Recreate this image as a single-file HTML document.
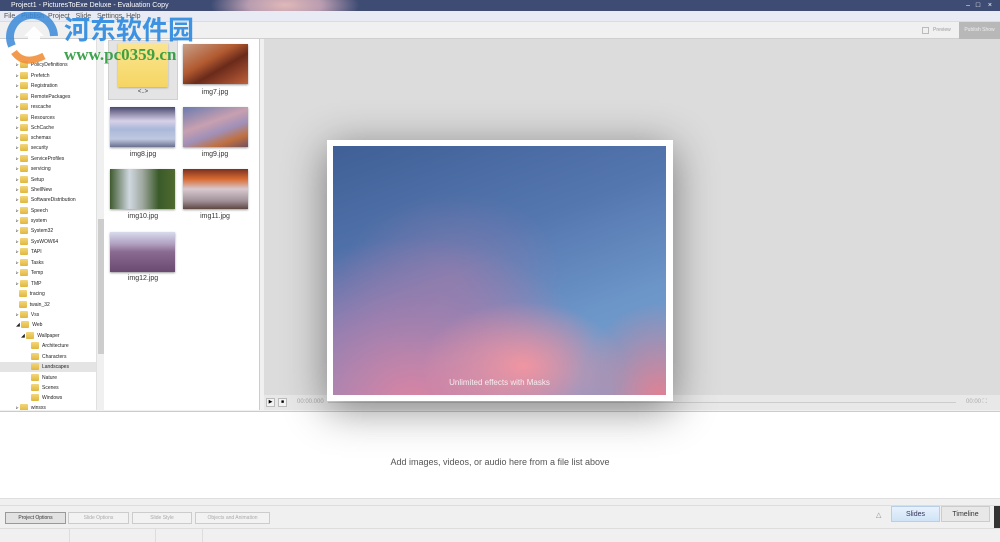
<!DOCTYPE html>
<html><head><meta charset="utf-8">
<style>
*{margin:0;padding:0;box-sizing:border-box}
body{width:1000px;height:541px;overflow:hidden;background:#f0f0f0;font-family:"Liberation Sans",sans-serif;position:relative}
.abs{position:absolute}
.title{left:0;top:0;width:1000px;height:11px;background:#3e4c74;color:#fff;font-size:7px;line-height:11px;padding-left:11px;overflow:hidden}
.menu{left:0;top:11px;width:1000px;height:11px;background:#e8ebf4;font-size:7px;line-height:11px;color:#555;padding-left:4px;border-bottom:1px solid #d8dce8}
.tool{left:0;top:22px;width:1000px;height:17px;background:#f0f0f0;border-bottom:1px solid #cfcfcf}
.tree{left:0;top:39px;width:104px;height:371px;background:#fff;border-right:1px solid #ccc;overflow:hidden}
.ti{position:absolute;height:10px;font-size:5px;line-height:10px;color:#222;white-space:nowrap}
.ti i{display:inline-block;width:8px;height:7px;background:linear-gradient(#f3d77a,#e0b640);vertical-align:middle;margin-right:3px;border-radius:1px}
.sb{left:96px;top:39px;width:8px;height:371px;background:#f0f0f0;border-left:1px solid #e0e0e0}
.thumbs{left:104px;top:39px;width:156px;height:371px;background:#fff;border-right:1px solid #ccc}
.th{position:absolute;width:65px;height:40px;box-shadow:0 1px 2px #999}
.lb{position:absolute;width:72px;text-align:center;font-size:7px;color:#333}
.prev{left:264px;top:39px;width:736px;height:356px;background:#dcdcdc}
.ctrl{left:264px;top:395px;width:736px;height:15px;background:#e8e8e8}
.frame{left:327px;top:140px;width:346px;height:261px;background:#fff;box-shadow:0 8px 40px rgba(0,0,0,.45)}
.img{left:333px;top:146px;width:333px;height:249px;overflow:hidden;background:linear-gradient(160deg,#3f5f96 0%,#5577b0 40%,#6c95c8 70%,#7aa4d2 100%)}
.bot{left:0;top:411px;width:1000px;height:87px;background:#fff;border-top:1px solid #ccc;text-align:center;font-size:9px;color:#555;line-height:100px}
.hs{left:0;top:498px;width:1000px;height:8px;background:#f0f0f0;border-top:1px solid #ddd;border-bottom:1px solid #ddd}
.btn{position:absolute;top:512px;height:12px;border:1px solid #ccc;font-size:5px;line-height:10px;text-align:center;color:#aaa;background:#f2f2f2}
.stat{left:0;top:528px;width:1000px;height:13px;background:#f0f0f0;border-top:1px solid #ddd}
</style></head><body>
<div class="abs title"><div class="abs" style="left:210px;top:-20px;width:150px;height:50px;background:radial-gradient(ellipse,#e0b8b8 0%,#b89cb0 35%,rgba(62,76,116,0) 70%)"></div><span style="position:relative">Project1 - PicturesToExe Deluxe - Evaluation Copy</span><span style="position:absolute;right:8px;top:0">&#8211;&nbsp;&nbsp;&nbsp;&#9633;&nbsp;&nbsp;&nbsp;&nbsp;&#215;</span></div>
<div class="abs menu">File&nbsp;&nbsp;&nbsp;Publish&nbsp;&nbsp;Project&nbsp;&nbsp;&nbsp;Slide&nbsp;&nbsp;&nbsp;Settings&nbsp;&nbsp;Help</div>
<div class="abs tool">
 <div class="abs" style="left:922px;top:5px;width:7px;height:7px;border:1px solid #bbb"></div>
 <div class="abs" style="left:933px;top:5px;font-size:5px;color:#999">Preview</div>
 <div class="abs" style="left:959px;top:0;width:41px;height:17px;background:#b8b8b8;color:#eee;font-size:5px;line-height:17px;text-align:center">Publish Show</div>
</div>
<div class="abs tree">
<div class="ti" style="left:16px;top:21px">▹ <i></i>PolicyDefinitions</div>
<div class="ti" style="left:16px;top:32px">▹ <i></i>Prefetch</div>
<div class="ti" style="left:16px;top:42px">▹ <i></i>Registration</div>
<div class="ti" style="left:16px;top:53px">▹ <i></i>RemotePackages</div>
<div class="ti" style="left:16px;top:63px">▹ <i></i>rescache</div>
<div class="ti" style="left:16px;top:74px">▹ <i></i>Resources</div>
<div class="ti" style="left:16px;top:84px">▹ <i></i>SchCache</div>
<div class="ti" style="left:16px;top:94px">▹ <i></i>schemas</div>
<div class="ti" style="left:16px;top:104px">▹ <i></i>security</div>
<div class="ti" style="left:16px;top:115px">▹ <i></i>ServiceProfiles</div>
<div class="ti" style="left:16px;top:125px">▹ <i></i>servicing</div>
<div class="ti" style="left:16px;top:136px">▹ <i></i>Setup</div>
<div class="ti" style="left:16px;top:146px">▹ <i></i>ShellNew</div>
<div class="ti" style="left:16px;top:156px">▹ <i></i>SoftwareDistribution</div>
<div class="ti" style="left:16px;top:167px">▹ <i></i>Speech</div>
<div class="ti" style="left:16px;top:177px">▹ <i></i>system</div>
<div class="ti" style="left:16px;top:187px">▹ <i></i>System32</div>
<div class="ti" style="left:16px;top:198px">▹ <i></i>SysWOW64</div>
<div class="ti" style="left:16px;top:208px">▹ <i></i>TAPI</div>
<div class="ti" style="left:16px;top:219px">▹ <i></i>Tasks</div>
<div class="ti" style="left:16px;top:229px">▹ <i></i>Temp</div>
<div class="ti" style="left:16px;top:240px">▹ <i></i>TMP</div>
<div class="ti" style="left:16px;top:250px">&nbsp;&nbsp;<i></i>tracing</div>
<div class="ti" style="left:16px;top:261px">&nbsp;&nbsp;<i></i>twain_32</div>
<div class="ti" style="left:16px;top:271px">▹ <i></i>Vss</div>
<div class="ti" style="left:16px;top:281px">◢ <i></i>Web</div>
<div class="ti" style="left:21px;top:292px">◢ <i></i>Wallpaper</div>
<div class="ti" style="left:31px;top:302px"><i></i>Architecture</div>
<div class="ti" style="left:31px;top:313px"><i></i>Characters</div>
<div class="ti" style="left:0;top:323px;width:96px;background:#e4e4e4;padding-left:31px"><i></i>Landscapes</div>
<div class="ti" style="left:31px;top:334px"><i></i>Nature</div>
<div class="ti" style="left:31px;top:344px"><i></i>Scenes</div>
<div class="ti" style="left:31px;top:354px"><i></i>Windows</div>
<div class="ti" style="left:16px;top:364px">▹ <i></i>winsxs</div>
</div>
<div class="abs sb"><div class="abs" style="left:1px;top:180px;width:6px;height:135px;background:#cdcdcd"></div></div>
<div class="abs thumbs">
 <div class="abs" style="left:4px;top:1px;width:70px;height:60px;background:#e4e4e4;border:1px solid #d0d0d0"></div>
 <div class="th" style="left:14px;top:4px;width:50px;height:44px;background:linear-gradient(#fbe591,#f5d563);box-shadow:0 1px 2px #aaa"></div>
 <div class="lb" style="left:3px;top:50px;font-size:6px">&lt;..&gt;</div>
 <div class="th" style="left:79px;top:5px;background:linear-gradient(150deg,#c7a08a,#b25a30 40%,#6a2a1a 60%,#c0603a)"></div>
 <div class="lb" style="left:75px;top:50px">img7.jpg</div>
 <div class="th" style="left:6px;top:68px;background:linear-gradient(#4a4a70,#d8d0e8 35%,#aab8d8 55%,#c0c8e0 80%,#6a7090)"></div>
 <div class="lb" style="left:3px;top:112px">img8.jpg</div>
 <div class="th" style="left:79px;top:68px;background:linear-gradient(160deg,#6a7ab0,#c8a0b0 40%,#a090b8 60%,#c07040 80%,#705060)"></div>
 <div class="lb" style="left:75px;top:112px">img9.jpg</div>
 <div class="th" style="left:6px;top:130px;background:linear-gradient(90deg,#405a30,#d0d8e0 30%,#a0a8a0 50%,#3a5a28 75%,#506a30)"></div>
 <div class="lb" style="left:3px;top:174px">img10.jpg</div>
 <div class="th" style="left:79px;top:130px;background:linear-gradient(#7a3020,#d86a30 25%,#d8c8d0 50%,#a09098 80%,#604840)"></div>
 <div class="lb" style="left:75px;top:174px">img11.jpg</div>
 <div class="th" style="left:6px;top:193px;background:linear-gradient(#d8dcec,#b0a0c0 30%,#8a6a90 50%,#6a4a70)"></div>
 <div class="lb" style="left:3px;top:236px">img12.jpg</div>
</div>
<div class="abs prev"></div>
<div class="abs ctrl">
 <div class="abs" style="left:2px;top:3px;width:9px;height:9px;border:1px solid #bbb;background:#f4f4f4;font-size:5px;text-align:center">▶</div>
 <div class="abs" style="left:14px;top:3px;width:9px;height:9px;border:1px solid #bbb;background:#f4f4f4;font-size:5px;text-align:center">■</div>
 <div class="abs" style="left:33px;top:4px;font-size:6px;color:#aaa">00:00.000</div>
 <div class="abs" style="left:64px;top:7px;width:628px;height:1px;background:#ccc"></div>
 <div class="abs" style="left:702px;top:4px;font-size:6px;color:#aaa">00:00 ⛶</div>
</div>
<div class="abs bot">Add images, videos, or audio here from a file list above</div>
<div class="abs frame"></div>
<div class="abs img">
 <div class="abs" style="left:-120px;top:90px;width:400px;height:260px;background:radial-gradient(ellipse at 50% 65%,rgba(225,130,160,.95),rgba(190,125,170,.6) 40%,rgba(150,120,170,0) 70%)"></div>
 <div class="abs" style="left:0;top:40px;width:240px;height:180px;background:radial-gradient(ellipse,rgba(160,125,170,.55),rgba(150,120,170,0) 65%)"></div>
 <div class="abs" style="left:80px;top:150px;width:220px;height:140px;background:radial-gradient(ellipse,rgba(245,150,160,.95),rgba(240,140,160,0) 65%)"></div>
 <div class="abs" style="left:230px;top:140px;width:160px;height:160px;background:radial-gradient(ellipse at 60% 70%,rgba(235,125,140,.9),rgba(240,130,150,0) 60%)"></div>
 <div class="abs" style="left:0;top:232px;width:333px;text-align:center;font-size:8px;color:#f4eef0">Unlimited effects with Masks</div>
</div>
<div class="abs hs"></div>
<div class="btn" style="left:5px;width:61px;color:#333;background:#e2e2e2;border-color:#999">Project Options</div>
<div class="btn" style="left:68px;width:61px">Slide Options</div>
<div class="btn" style="left:132px;width:60px">Slide Style</div>
<div class="btn" style="left:195px;width:75px">Objects and Animation</div>
<div class="abs" style="left:876px;top:511px;font-size:7px;color:#888">△</div>
<div class="abs" style="left:891px;top:506px;width:49px;height:16px;background:linear-gradient(#e8f2fc,#cfe3f7);border:1px solid #b8cfe8;font-size:7px;line-height:15px;text-align:center;color:#335">Slides</div>
<div class="abs" style="left:941px;top:506px;width:49px;height:16px;background:#e8e8e8;border:1px solid #ccc;font-size:7px;line-height:15px;text-align:center;color:#333">Timeline</div>
<div class="abs" style="left:994px;top:506px;width:6px;height:35px;background:#333"></div>
<div class="abs stat"><div class="abs" style="left:69px;top:0;width:1px;height:13px;background:#ddd"></div><div class="abs" style="left:155px;top:0;width:1px;height:13px;background:#ddd"></div><div class="abs" style="left:202px;top:0;width:1px;height:13px;background:#ddd"></div></div>
<svg class="abs" style="left:4px;top:12px" width="62" height="52" viewBox="0 0 62 52"><path d="M8 34 A22 22 0 1 1 50 24" fill="none" stroke="#3a8ad8" stroke-width="8" opacity=".85"/><path d="M10 40 Q20 54 40 44" stroke="#f08a30" stroke-width="7" fill="none" opacity=".85"/><path d="M20 24 L30 14 L40 24 L36 24 L36 36 L24 36 L24 24 Z" fill="#fff" opacity=".9"/></svg>
<div class="abs" style="left:64px;top:12px;font-size:26px;font-weight:bold;color:#2a8ae0;font-family:'Noto Sans CJK SC',sans-serif;line-height:34px;opacity:.9">河东软件园</div>
<div class="abs" style="left:64px;top:45px;font-size:17px;font-weight:bold;color:#2a9a3a;font-family:'Liberation Serif',serif;opacity:.9">www.pc0359.cn</div>
</body></html>
